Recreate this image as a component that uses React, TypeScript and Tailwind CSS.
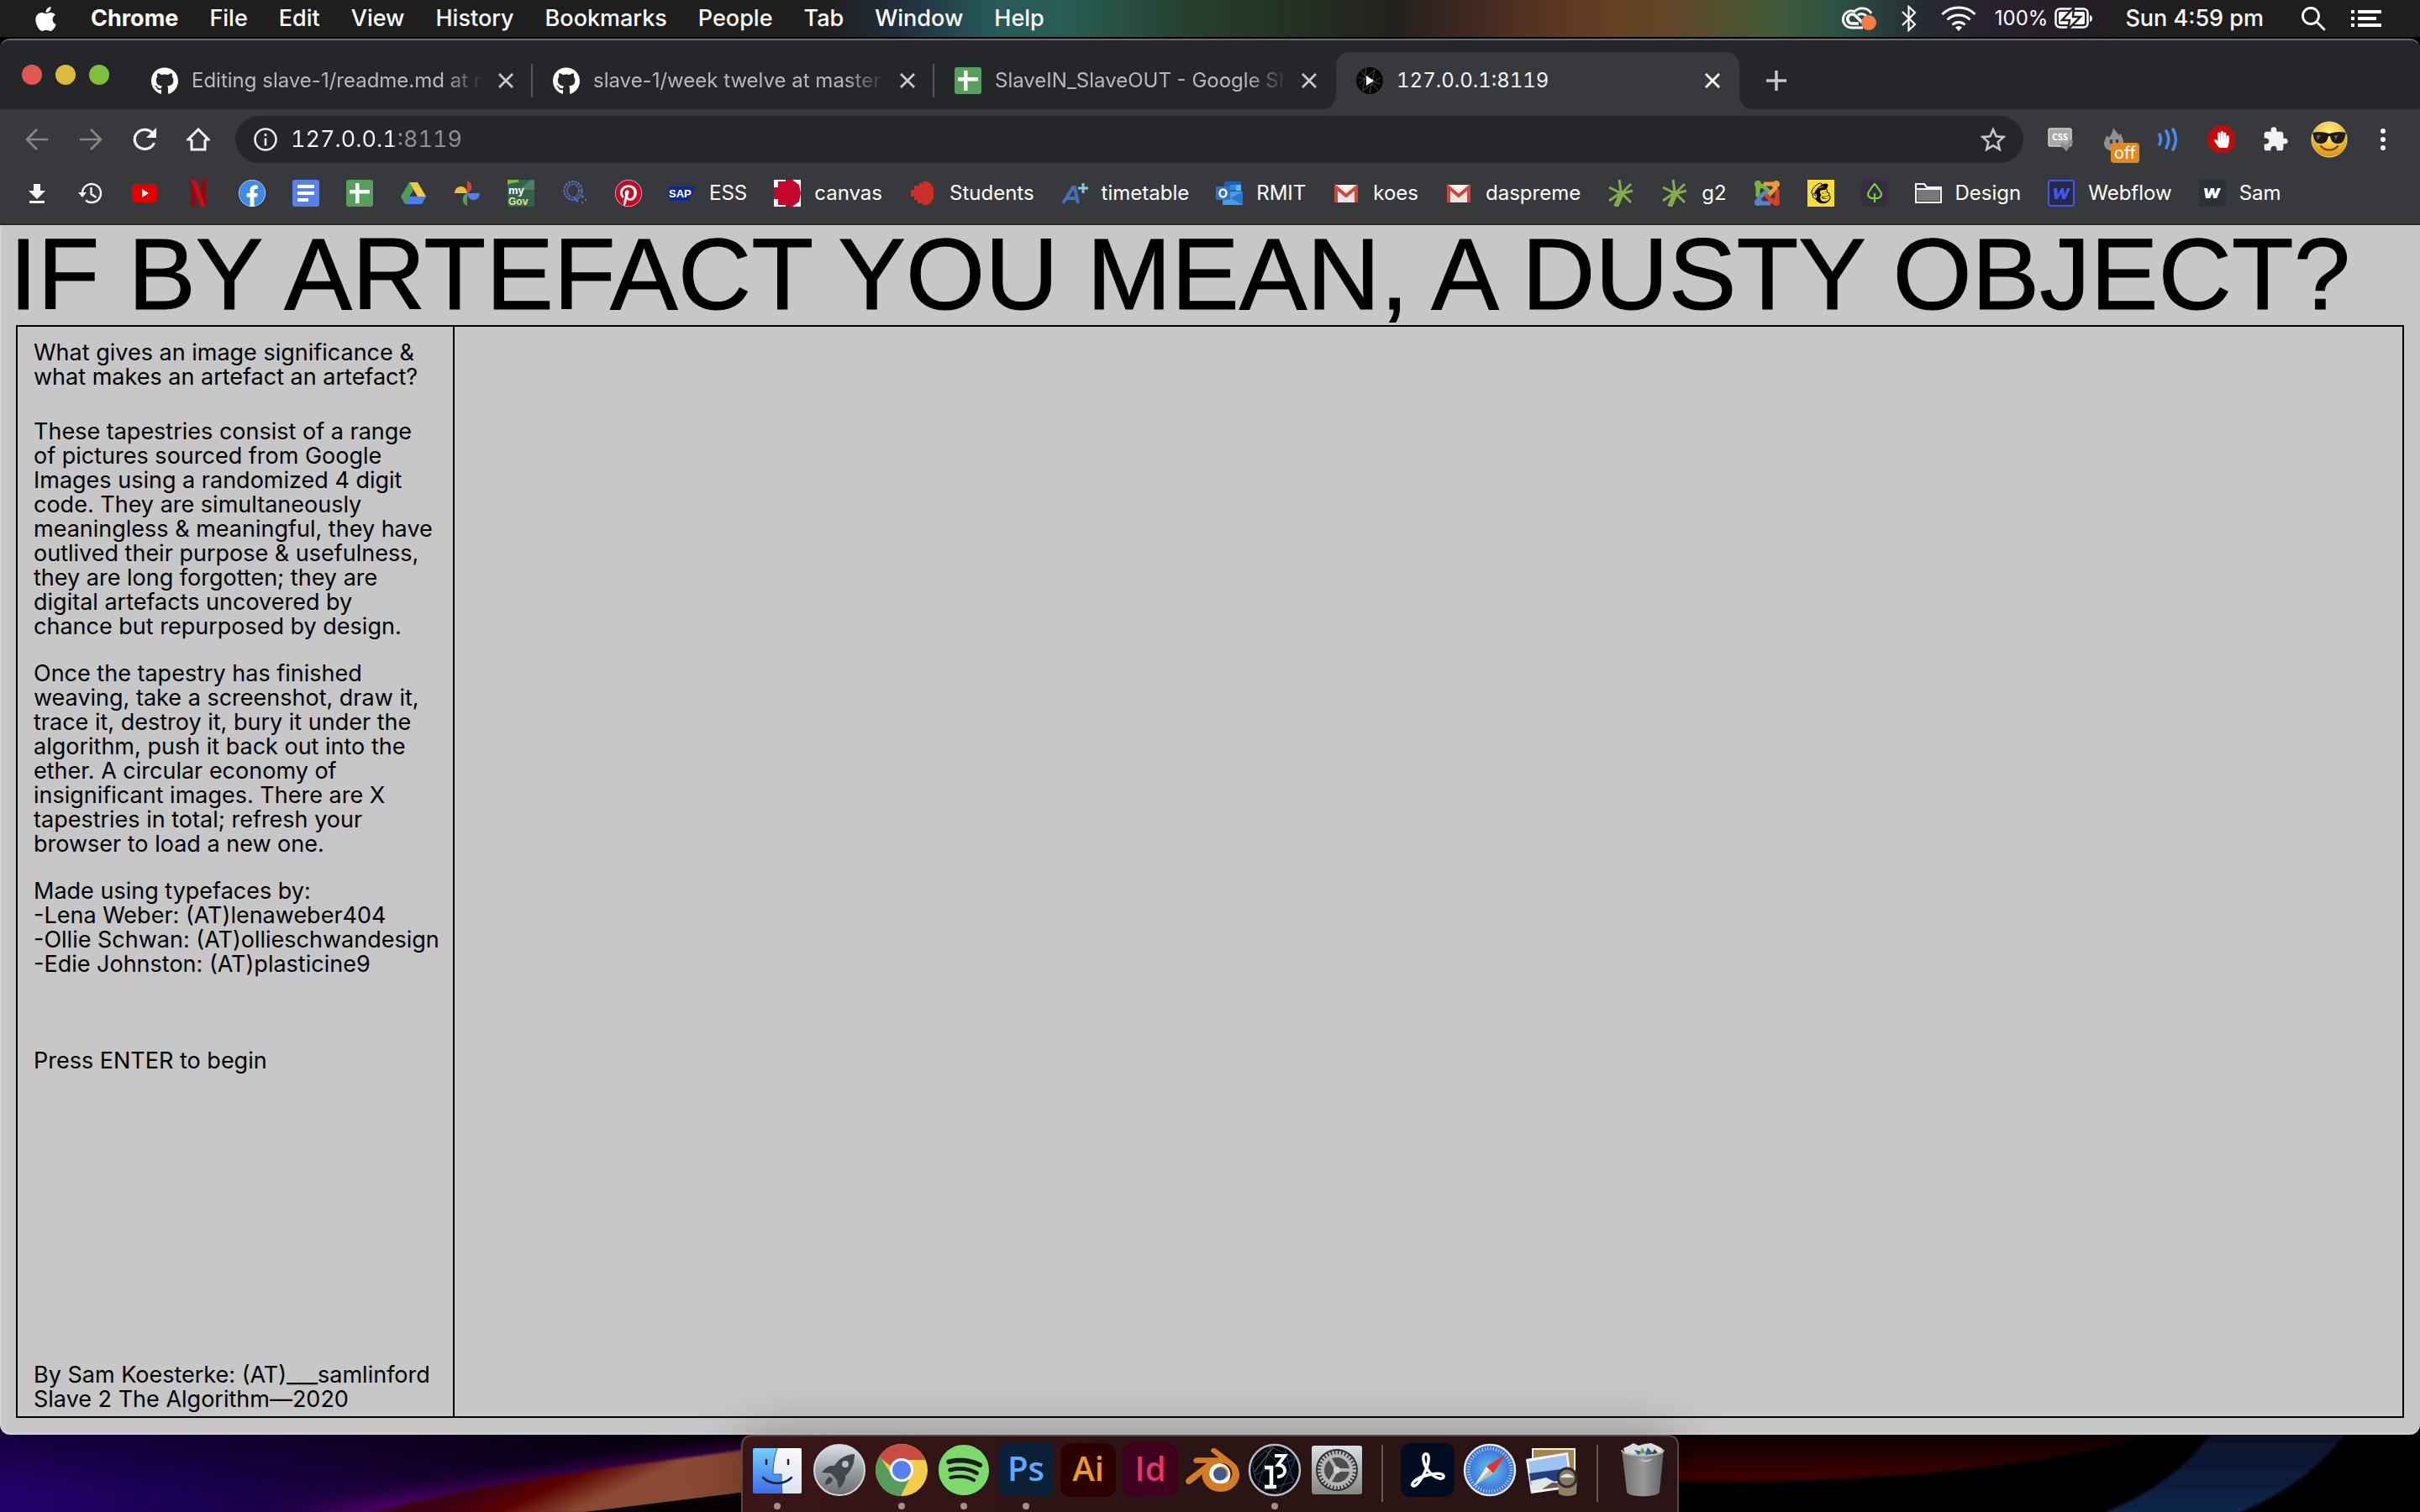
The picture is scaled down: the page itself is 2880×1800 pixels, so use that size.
import React from "react";
import { FaApple, FaFacebook, FaGithub, FaHandPaper, FaMailchimp, FaPinterest, FaSpotify } from "react-icons/fa";
import { MdExtension } from "react-icons/md";
import { SiBlender } from "react-icons/si";

type Box = { className?: string };

/* ---------- menu bar icons ---------- */

const CloudIcon = () => (
  <svg viewBox="0 0 42 32" className="h-8 w-[42px]" fill="none" stroke="#fff" strokeWidth="2.800">
    <path d="M26 27H12a10 10 0 1 1 4-19.300" />
    <path d="M15 9a12 11 0 0 1 21 1" />
    <path d="M21 22H13a5.500 5.500 0 1 1 4.500-9l8 8" strokeWidth="3.600" />
    <path d="M20 12a8 8 0 0 1 10 1" strokeWidth="3.200" />
    <circle cx="33" cy="21" r="9" fill="#f47b42" stroke="none" />
  </svg>
);

const BluetoothIcon = () => (
  <svg viewBox="0 0 20 32" className="h-8 w-5" fill="none" stroke="#fff" strokeWidth="2.200">
    <path d="M2 8l15 15-7.500 7V2L17 9 2 24" />
  </svg>
);

const WifiIcon = () => (
  <svg viewBox="0 0 42 32" className="h-8 w-[42px]" fill="none" stroke="#fff" strokeWidth="3">
    <path d="M1.500 11a28 28 0 0 1 39 0M7.500 17.500a19.500 19.500 0 0 1 27 0M13.500 23.500a11 11 0 0 1 15 0" />
    <path d="M21 31l-4-4.500a6 6 0 0 1 8 0z" fill="#fff" stroke="none" />
  </svg>
);

const BatteryIcon = () => (
  <svg viewBox="0 0 46 26" className="h-[26px] w-[46px]">
    <rect x="1.500" y="1.500" width="38" height="22" rx="5" fill="none" stroke="#fff" strokeWidth="2.500" />
    <rect x="5" y="5" width="31" height="15" rx="2" fill="#fff" />
    <path d="M42 9v8c4-1 4-7 0-8z" fill="#fff" />
    <path d="M23 0L9 15h9l-2 11 15-15h-9z" fill="#fff" stroke="#26202b" strokeWidth="2.500" />
  </svg>
);

const SearchIcon = () => (
  <svg viewBox="0 0 30 30" className="h-[30px] w-[30px]" fill="none" stroke="#fff" strokeWidth="2.800">
    <circle cx="12" cy="12" r="9.500" />
    <path d="M19 19l9 9" strokeLinecap="round" />
  </svg>
);

const ListIcon = () => (
  <svg viewBox="0 0 36 22" className="h-[22px] w-9" fill="#fff">
    <path d="M0 1h4v4H0zM8 1h28v4H8zM0 9h4v4H0zM8 9h22v4H8zM0 17h4v4H0zM8 17h28v4H8z" />
  </svg>
);

/* ---------- browser icons ---------- */

const Cross = ({ className = "" }: Box) => (
  <svg viewBox="0 0 20 20" className={`h-5 w-5 ${className}`} fill="none" stroke="currentColor" strokeWidth="2.800">
    <path d="M2 2l16 16M18 2L2 18" />
  </svg>
);

const SheetsIcon = () => (
  <svg viewBox="0 0 32 32" className="h-8 w-8">
    <rect width="32" height="32" rx="3" fill="#579f5d" />
    <path d="M4 12h24v4.500H4zM11 4h4.500v24H11z" fill="#fff" />
  </svg>
);

const ProcessingMini = () => (
  <svg viewBox="0 0 32 32" className="h-8 w-8">
    <circle cx="16" cy="16" r="16" fill="#060606" />
    <path d="M6 5l20 22M3 20L22 3M8 28L29 12M12 1L8 28M3 12l26 8M22 3l-6 28" stroke="#4a4a4a" strokeWidth="1" />
    <path d="M12 10l9 6-9 6z" fill="#fff" />
  </svg>
);

const BackIcon = () => (
  <svg viewBox="0 0 28 28" className="h-7 w-7" fill="none" stroke="#87888a" strokeWidth="2.600">
    <path d="M27 14H3M14 2L2 14l12 12" />
  </svg>
);
const ForwardIcon = () => (
  <svg viewBox="0 0 28 28" className="h-7 w-7" fill="none" stroke="#87888a" strokeWidth="2.600">
    <path d="M1 14h24M14 2l12 12-12 12" />
  </svg>
);
const ReloadIcon = () => (
  <svg viewBox="0 0 28 28" className="h-7 w-7" fill="none" stroke="#f1f3f4" strokeWidth="3.200">
    <path d="M23 6a12 11.500 0 1 0 2.500 12" />
    <path d="M28 0v12H16z" fill="#f1f3f4" stroke="none" />
  </svg>
);
const HomeIcon = () => (
  <svg viewBox="0 0 28 28" className="h-7 w-7" fill="none" stroke="#f1f3f4" strokeWidth="3">
    <path d="M6 14v12h16V14M6 14H2L14 2l12 12h-4" />
  </svg>
);
const InfoIcon = () => (
  <svg viewBox="0 0 28 28" className="h-7 w-7" fill="none" stroke="#e8eaed" strokeWidth="2.600">
    <circle cx="14" cy="14" r="12.500" />
    <path d="M14 12.500v9M14 7v3" />
  </svg>
);
const StarIcon = () => (
  <svg viewBox="0 0 32 32" className="h-8 w-8" fill="none" stroke="#c5c7ca" strokeWidth="2.600">
    <path d="M16 4l3.500 8.300 9 .800-6.800 6 2 8.800L16 23.300 8.300 27.900l2-8.800-6.800-6 9-.800z" />
  </svg>
);

const CssIcon = () => (
  <svg viewBox="0 0 32 28" className="h-7 w-8">
    <rect x="2" y="1" width="27" height="21" rx="2" fill="#a9a9a9" stroke="#d0d0d0" strokeWidth="1.500" />
    <text x="15.500" y="15" textAnchor="middle" fontSize="11" fontWeight="700" fill="#fff" fontFamily="Open Sans, sans-serif">CSS</text>
    <path d="M17 19l6 6 7-10" fill="none" stroke="#8b8b8b" strokeWidth="4" />
  </svg>
);
const FlameIcon = () => (
  <svg viewBox="0 0 32 32" className="h-8 w-8">
    <path d="M15 2c4 6 5 6 7 9l2-2c2 6 4 9 3 14-1 5-5 7-11 7S4 27 4 21c0-4 2-5 3-10l3 3c3-4 4-7 5-12z" fill="#8f9092" />
    <path d="M11 16h3v5h-3zM18 16h3v5h-3z" fill="#3a3b3e" />
  </svg>
);
const SoundIcon = () => (
  <svg viewBox="0 0 28 30" className="h-[30px] w-7" fill="none" stroke="#4a8af4" strokeWidth="3.600" strokeLinecap="round">
    <path d="M4 9a14 14 0 0 1 0 12M12 5a20 20 0 0 1 0 20M20 3a24 24 0 0 1 0 24" />
  </svg>
);
const BlockIcon = () => (
  <span className="relative flex h-8 w-8 items-center justify-center">
    <svg viewBox="0 0 32 32" className="absolute h-8 w-8"><path d="M9 0h14l9 9v14l-9 9H9l-9-9V9z" fill="#c40a0a" /></svg>
    <FaHandPaper className="relative text-xl text-white" />
  </span>
);
const AvatarIcon = () => (
  <svg viewBox="0 0 44 44" className="h-11 w-11">
    <defs>
      <radialGradient id="face" cx=".5" cy=".3" r=".7"><stop offset="0" stopColor="#fff08a" /><stop offset=".6" stopColor="#f5c02c" /><stop offset="1" stopColor="#d98a14" /></radialGradient>
    </defs>
    <circle cx="22" cy="22" r="21" fill="url(#face)" stroke="#eadfb0" />
    <path d="M2 14c7-2 13-1 20 1 7-2 13-3 20-1l-1 3c-1 7-4 10-9 10-6 0-8-4-9-9h-2c-1 5-3 9-9 9-5 0-8-3-9-10z" fill="#1d1b18" />
    <path d="M7 17l5 0-4 6zM28 17h5l-4 6z" fill="#67635c" />
    <path d="M12 30c5 6 15 6 20 0" fill="none" stroke="#7b4a10" strokeWidth="2.500" strokeLinecap="round" />
  </svg>
);

/* ---------- bookmark icons ---------- */

const DownloadIcon = () => (
  <svg viewBox="0 0 32 32" className="h-8 w-8" fill="#f1f3f4"><path d="M12 5h8v8h6l-10 10L6 13h6zM7 25h18v3H7z" /></svg>
);
const HistoryIcon = () => (
  <svg viewBox="0 0 32 32" className="h-8 w-8" fill="none" stroke="#f1f3f4" strokeWidth="2.400">
    <path d="M6 16a11 11 0 1 1 4 8.500M16.500 9v8l6 4" />
    <path d="M1 15h10l-5 6z" fill="#f1f3f4" stroke="none" />
  </svg>
);
const YouTubeIcon = () => (
  <svg viewBox="0 0 32 32" className="h-8 w-8"><rect x="1" y="5" width="30" height="22" rx="5" fill="#e00000" /><path d="M13 11l8 5-8 5z" fill="#fff" /></svg>
);
const NetflixIcon = () => (
  <svg viewBox="0 0 32 32" className="h-8 w-8"><path d="M7 0h6v32H7zM19 0h6v32h-6z" fill="#8f0a10" /><path d="M7 0h6l12 32h-6z" fill="#c40e18" /></svg>
);
const DocsIcon = () => (
  <svg viewBox="0 0 32 32" className="h-8 w-8"><rect width="32" height="32" rx="3" fill="#5a80ee" /><path d="M6 6h20v4H6zM6 14h20v4H6zM6 22h13v4H6z" fill="#fff" /></svg>
);
const DriveIcon = () => (
  <svg viewBox="0 0 32 32" className="h-8 w-8"><path d="M11 3L1 20l5 9 10-17z" fill="#4e9d58" /><path d="M11 3h10l10 17H21z" fill="#f2c944" /><path d="M11 20h20l-5 9H6z" fill="#4f7ee8" /></svg>
);
const PhotosIcon = () => (
  <svg viewBox="0 0 32 32" className="h-8 w-8"><path d="M16 1a8 8 0 0 1 0 15z" fill="#cf4636" /><path d="M31 16a7.500 8 0 0 1-15 0z" fill="#5180ea" /><path d="M16 31a8 8 0 0 1 0-15z" fill="#57a05a" /><path d="M1 16a7.500 8 0 0 1 15 0z" fill="#eebd3c" /></svg>
);
const MyGovIcon = () => (
  <svg viewBox="0 0 32 32" className="h-8 w-8">
    <rect width="32" height="32" rx="2" fill="#33634f" /><path d="M14 12L28 0h4v12z" fill="#4d8066" /><path d="M0 0h13v3c-5 0-9 1-13 3z" fill="#7fb540" />
    <text x="1" y="17" fontSize="13" fontWeight="700" fill="#fff" fontFamily="Liberation Sans, sans-serif">my</text>
    <text x="1" y="30" fontSize="12" fontWeight="700" fill="#e8e87a" fontFamily="Liberation Sans, sans-serif">Gov</text>
  </svg>
);
const QuillIcon = () => (
  <svg viewBox="0 0 32 32" className="h-8 w-8" fill="none" stroke="#5470bd">
    <ellipse cx="14" cy="13" rx="10.500" ry="11" strokeWidth="2" strokeDasharray="3 1" /><ellipse cx="14" cy="13" rx="7" ry="8" strokeWidth="2" strokeDasharray="2 1" /><path d="M15 21l5 5M24 20h3M28 24h2M24 27h2" strokeWidth="2.500" />
  </svg>
);
const SapIcon = () => (
  <svg viewBox="0 0 32 32" className="h-8 w-8"><path d="M0 8h32L24 25H0z" fill="#0d2a8c" /><text x="0" y="21" fontSize="13" fontWeight="700" fill="#fff" fontFamily="Liberation Sans, sans-serif">SAP</text></svg>
);
const CanvasIcon = () => (
  <svg viewBox="0 0 32 32" className="h-8 w-8"><path d="M0 0h32v32H0z" fill="#fff" /><path d="M5 2h9v-2h8l8 6 2 10-2 10-8 6h-8v-2H5v-7H0V9h5z" fill="#c4062a" /></svg>
);
const StudentsIcon = () => (
  <svg viewBox="0 0 32 32" className="h-8 w-8"><path d="M16 2h6l4 3 3 5v12l-3 5-4 3h-6v-2h-6v-4H6v-4H2v-8h4V7h6V4h4z" fill="#c92f28" /></svg>
);
const TimetableIcon = () => (
  <svg viewBox="0 0 32 32" className="h-8 w-8" fill="none">
    <path d="M2 28L14 9h2l4 19M6 22h13" stroke="#3f72b8" strokeWidth="4" /><path d="M26 4v12M20 10h12" stroke="#8fc3e0" strokeWidth="3" />
  </svg>
);
const OutlookIcon = () => (
  <svg viewBox="0 0 32 32" className="h-8 w-8">
    <path d="M10 2h20v15H10z" fill="#1f5fb8" /><path d="M17 6h7v6h-7z" fill="#3388d8" /><path d="M24 6h6v7h-6z" fill="#62b4ec" />
    <path d="M8 14h24v16H8z" fill="#4a9be4" /><path d="M32 14v16L18 22z" fill="#2c74cc" /><rect y="8" width="17" height="16" rx="1" fill="#2f6fd0" />
    <ellipse cx="8.500" cy="16" rx="4" ry="4.500" fill="none" stroke="#fff" strokeWidth="2.500" />
  </svg>
);
const GmailIcon = () => (
  <svg viewBox="0 0 32 32" className="h-8 w-8"><rect x="2" y="6" width="28" height="21" rx="2" fill="#e8e6e4" /><path d="M4 27V9l12 10L28 9v18" fill="none" stroke="#cc463a" strokeWidth="4" /><path d="M7 6l9 8 9-8z" fill="#f4f2f0" /></svg>
);
const SproutIcon = () => (
  <svg viewBox="0 0 32 32" className="h-8 w-8" fill="none" stroke="#82ad4c">
    <path d="M14 0l2 13M28 5l-9 9M30 13l-11 3M2 9l12 6M2 25l13-9M18 17l10 10" strokeWidth="3" />
    <path d="M17 13c-1 7-4 12-7 19" strokeWidth="6" />
  </svg>
);
const JoomlaIcon = () => (
  <svg viewBox="0 0 32 32" className="h-8 w-8" fill="none" strokeWidth="5">
    <path d="M5 20V9l6-2 9 9" stroke="#78b63a" /><path d="M12 5h11l3 5-9 9" stroke="#ee9a35" /><path d="M28 12v11l-6 3-9-10" stroke="#df3e29" /><path d="M20 28H9l-3-6 10-9" stroke="#5585c9" />
    <circle cx="5" cy="5" r="3" fill="#78b63a" stroke="#78b63a" strokeWidth="2" /><circle cx="27" cy="5" r="3" fill="#ee9a35" stroke="#ee9a35" strokeWidth="2" /><circle cx="27" cy="27" r="3" fill="#df3e29" stroke="#df3e29" strokeWidth="2" /><circle cx="5" cy="27" r="3" fill="#5585c9" stroke="#5585c9" strokeWidth="2" />
  </svg>
);
const ChimpIcon = () => (
  <span className="flex h-8 w-8 items-center justify-center bg-[#f7dc3c]"><FaMailchimp className="text-[28px] text-black" /></span>
);
const TreeIcon = () => (
  <svg viewBox="0 0 32 32" className="h-8 w-8"><rect width="32" height="32" rx="6" fill="#3b2b42" /><path d="M16 27V16M16 22h-4c-5-2-5-6-2-9 2-3 3-5 6-8 3 3 4 5 6 8 3 3 3 7-2 9h-4" fill="none" stroke="#66e02e" strokeWidth="2.200" /></svg>
);
const FolderIcon = () => (
  <svg viewBox="0 0 32 32" className="h-8 w-8"><path d="M1 27V5h10l3 4h17v18z" fill="#38393c" stroke="#f1f3f4" strokeWidth="2.200" /><path d="M3 12h26v13H3z" fill="#77787a" /><path d="M1 11h30" stroke="#f1f3f4" strokeWidth="2" /></svg>
);
const WebflowIcon = () => (
  <svg viewBox="0 0 32 32" className="h-8 w-8"><rect x="1" y="1" width="30" height="30" rx="3" fill="#262a3a" stroke="#4353ff" strokeWidth="2" /><path d="M7 10h4l1 8 4-8h3l1 8 3-8h4l-6 13h-4l-1-7-4 7H8z" fill="#4353ff" /></svg>
);
const SamIcon = () => (
  <svg viewBox="0 0 32 32" className="h-8 w-8"><path d="M0 0h32v32H0z" fill="#2d313c" /><path d="M6 10h4l1 7 3-7h4l1 7 3-7h4l-5 12h-4l-1-6-3 6H8z" fill="#fff" /></svg>
);

const bookmarks: { name: string; label?: string; icon: React.ReactNode }[] = [
  { name: "Downloads", icon: <DownloadIcon /> },
  { name: "History", icon: <HistoryIcon /> },
  { name: "YouTube", icon: <YouTubeIcon /> },
  { name: "Netflix", icon: <NetflixIcon /> },
  { name: "Facebook", icon: <span className="block rounded-full bg-white"><FaFacebook className="text-[32px] text-[#3f8be8]" /></span> },
  { name: "Docs", icon: <DocsIcon /> },
  { name: "Sheets", icon: <SheetsIcon /> },
  { name: "Drive", icon: <DriveIcon /> },
  { name: "Photos", icon: <PhotosIcon /> },
  { name: "myGov", icon: <MyGovIcon /> },
  { name: "Q", icon: <QuillIcon /> },
  { name: "Pinterest", icon: <span className="block rounded-full bg-white"><FaPinterest className="text-[32px] text-[#c40a24]" /></span> },
  { name: "ESS", label: "ESS", icon: <SapIcon /> },
  { name: "canvas", label: "canvas", icon: <CanvasIcon /> },
  { name: "Students", label: "Students", icon: <StudentsIcon /> },
  { name: "timetable", label: "timetable", icon: <TimetableIcon /> },
  { name: "RMIT", label: "RMIT", icon: <OutlookIcon /> },
  { name: "koes", label: "koes", icon: <GmailIcon /> },
  { name: "daspreme", label: "daspreme", icon: <GmailIcon /> },
  { name: "g1", icon: <SproutIcon /> },
  { name: "g2", label: "g2", icon: <SproutIcon /> },
  { name: "Joomla", icon: <JoomlaIcon /> },
  { name: "Mailchimp", icon: <ChimpIcon /> },
  { name: "Tree", icon: <TreeIcon /> },
  { name: "Design", label: "Design", icon: <FolderIcon /> },
  { name: "Webflow", label: "Webflow", icon: <WebflowIcon /> },
  { name: "Sam", label: "Sam", icon: <SamIcon /> },
];

/* ---------- dock icons ---------- */

const FinderIcon = () => (
  <svg viewBox="0 0 64 64" className="h-16 w-16">
    <defs>
      <linearGradient id="fl" x2="0" y2="1"><stop stopColor="#74d0fb" /><stop offset="1" stopColor="#3f6bea" /></linearGradient>
      <linearGradient id="fr" x2="0" y2="1"><stop stopColor="#f8f8f8" /><stop offset="1" stopColor="#dce3f2" /></linearGradient>
    </defs>
    <rect x="3" y="6" width="58" height="54" rx="2" fill="url(#fl)" />
    <path d="M32 6h27a2 2 0 0 1 2 2v50a2 2 0 0 1-2 2H38c-1-7-1-14-1-23h-10c0-12 2-22 5-31z" fill="url(#fr)" />
    <path d="M32 6c-3 9-5 18-5 31h10c0 9 0 16 1 23" fill="none" stroke="#2a5ca8" strokeWidth="1" />
    <path d="M19 20v5M45 20v5M15 41c9 9 25 9 34 0" fill="none" stroke="#15233c" strokeWidth="2.500" strokeLinecap="round" />
  </svg>
);
const LaunchpadIcon = () => (
  <svg viewBox="0 0 64 64" className="h-16 w-16">
    <defs><linearGradient id="lp" x2="0" y2="1"><stop stopColor="#dbe4ec" /><stop offset=".5" stopColor="#9aa0a6" /><stop offset="1" stopColor="#6d6e70" /></linearGradient></defs>
    <circle cx="32" cy="32" r="30" fill="url(#lp)" stroke="#d5d9dc" strokeWidth="2" />
    <path d="M50 13c-12 1-19 6-24 14-5-1-11 2-15 8l11 1 7 8 2 10c6-4 8-10 8-15 7-6 11-14 11-26z" fill="#42474b" />
    <circle cx="39" cy="25" r="4" fill="#b9bec2" /><path d="M21 40c-5 2-6 6-6 10 5-1 8-3 9-7z" fill="#42474b" />
  </svg>
);
const ChromeIcon = () => (
  <svg viewBox="0 0 64 64" className="h-16 w-16">
    <circle cx="32" cy="32" r="31" fill="#f4cb4a" />
    <path d="M5.200 16.500A31 31 0 0 1 60.500 20H32a13 13 0 0 0-12 8z" fill="#c84c40" />
    <path d="M6 15.500A31 31 0 0 0 31 63l12-24a13 13 0 0 1-23-1z" fill="#569c5c" />
    <circle cx="32" cy="32" r="14" fill="#fff" /><circle cx="32" cy="32" r="11" fill="#5781ee" />
  </svg>
);
const AdobeTile = ({ text, className }: { text: string; className: string }) => (
  <span className={`flex h-16 w-[66px] items-center justify-center rounded-xl pb-1 font-['Open_Sans','Noto_Sans',sans-serif] text-[40px] leading-none font-semibold ${className}`}>{text}</span>
);
const ProcessingIcon = () => (
  <svg viewBox="0 0 64 64" className="h-16 w-16">
    <circle cx="32" cy="32" r="30" fill="#04070d" stroke="#b9bcc0" strokeWidth="2.500" />
    <path d="M5 24l22-20 30 14-20 42-28-18zM27 4L12 50M57 18L8 38M20 8l36 36M44 6l10 40-34 10" fill="none" stroke="#31456a" strokeWidth="1" />
    <path d="M30 5L8 34" stroke="#8a8a50" strokeWidth="1" />
    <path d="M20 29h8v22M20 52h14" fill="none" stroke="#fff" strokeWidth="4.500" />
    <path d="M32 15h12l-8 11c11 0 11 14-1 14" fill="none" stroke="#fff" strokeWidth="4" />
  </svg>
);
const SettingsIcon = () => (
  <svg viewBox="0 0 64 64" className="h-16 w-16">
    <defs><linearGradient id="st" x2="0" y2="1"><stop stopColor="#d6e2ea" /><stop offset="1" stopColor="#85837f" /></linearGradient></defs>
    <rect x="2" y="3" width="60" height="58" rx="3" fill="url(#st)" />
    <circle cx="32" cy="32" r="25" fill="#2d2d2d" />
    <circle cx="32" cy="32" r="20.500" fill="none" stroke="#b5b5b5" strokeWidth="5" strokeDasharray="2.600 1.500" />
    <circle cx="32" cy="32" r="17" fill="#4d4d4d" stroke="#b5b5b5" strokeWidth="4" />
    <path d="M32 32h17M32 32L23 17M32 32l-9 15" stroke="#b5b5b5" strokeWidth="4" /><circle cx="32" cy="32" r="4" fill="#d0d0d0" />
  </svg>
);
const AcrobatIcon = () => (
  <svg viewBox="0 0 64 64" className="h-16 w-16">
    <rect width="64" height="64" rx="12" fill="#020c20" />
    <path d="M29 13c5-2 6 8 0 21-5 11-11 18-14 17-4-2 2-9 17-13 11-3 20-2 19 2-1 5-12 1-18-7-6-7-8-18-4-20z" fill="none" stroke="#fff" strokeWidth="3.500" strokeLinejoin="round" />
  </svg>
);
const SafariIcon = () => (
  <svg viewBox="0 0 64 64" className="h-16 w-16">
    <defs><radialGradient id="sf"><stop stopColor="#6cc4e8" /><stop offset="1" stopColor="#2f66d8" /></radialGradient></defs>
    <circle cx="32" cy="32" r="30" fill="url(#sf)" stroke="#e4e6ea" strokeWidth="2.500" />
    <circle cx="32" cy="32" r="25.500" fill="none" stroke="#cfe3f8" strokeWidth="4" strokeDasharray="1 2.330" />
    <path d="M51 13L28 28l8 8z" fill="#e0322c" /><path d="M13 51l15-23 8 8z" fill="#eceef0" /><path d="M13 51l19-19 4 4z" fill="#b8bcc0" />
  </svg>
);
const PreviewIcon = () => (
  <svg viewBox="0 0 64 64" className="h-16 w-16">
    <rect x="9" y="7" width="50" height="40" fill="#a5834e" stroke="#f0f0f0" strokeWidth="2" />
    <path d="M1 19l50-8 5 42-49 7z" fill="#f4f4f4" /><path d="M4 22l45-8 2 18-45 5z" fill="#9fc3f0" /><path d="M5 36l46-6 2 13-46 7z" fill="#233f82" /><path d="M7 45l18-4 12 6 16-6 1 9-46 7z" fill="#dfe6ea" /><path d="M20 55l12-8 20 1v3z" fill="#6a5a44" />
    <path d="M39 42h23l-1 18c-4 4-17 4-21 0z" fill="#8d8065" /><circle cx="50" cy="41" r="11" fill="#86795e" stroke="#2b2b2b" strokeWidth="3" /><path d="M42 41c4-6 12-6 16 0z" fill="#dce2e6" />
  </svg>
);
const TrashIcon = () => (
  <svg viewBox="0 0 64 64" className="h-16 w-16">
    <defs><linearGradient id="tr"><stop stopColor="#6c6e70" /><stop offset=".5" stopColor="#98999b" /><stop offset="1" stopColor="#5f6163" /></linearGradient></defs>
    <path d="M11 13L9 6l7-3 5-3 6 3 7-2 8-1 9 4 5 3-2 8z" fill="#dcdcdc" /><path d="M22 8l8 2-3 5zM38 5l7 8-11 2z" fill="#2f5d90" /><path d="M31 5l5 7-8 1z" fill="#74a04a" /><path d="M46 7l5 6-9 1z" fill="#4a3d3d" />
    <path d="M7 8c0 9 50 9 50 0l-5 50c-1 7-38 7-39 0z" fill="url(#tr)" /><path d="M7 8c0 9 50 9 50 0" fill="none" stroke="#b7babd" strokeWidth="2" />
    <path d="M27 18c6 7 12 5 18 0-4 2-14 3-18 0z" fill="#bdbdbd" />
  </svg>
);

type DockApp = { name: string; icon: React.ReactNode; open?: boolean };

const apps: DockApp[] = [
  { name: "Finder", icon: <FinderIcon />, open: true },
  { name: "Launchpad", icon: <LaunchpadIcon /> },
  { name: "Chrome", icon: <ChromeIcon />, open: true },
  { name: "Spotify", icon: <span className="block rounded-full bg-[#1c1c1c]"><FaSpotify className="text-[62px] text-[#7dd96c]" /></span>, open: true },
  { name: "Photoshop", icon: <AdobeTile text="Ps" className="bg-[#0c2135] text-[#62a8ff]" />, open: true },
  { name: "Illustrator", icon: <AdobeTile text="Ai" className="bg-[#2d0000] text-[#ec9a28]" /> },
  { name: "InDesign", icon: <AdobeTile text="Id" className="bg-[#3f0020] text-[#e2386a]" /> },
  {
    name: "Blender",
    icon: (
      <span className="relative flex h-16 w-16 items-center justify-center">
        <svg viewBox="0 0 24 24" className="absolute h-16 w-16"><circle cx="15" cy="14" r="5" fill="#fff" /></svg>
        <SiBlender className="relative text-[64px] text-[#d37c22]" />
        <svg viewBox="0 0 24 24" className="absolute h-16 w-16"><circle cx="15.300" cy="13.800" r="2.900" fill="#3d5c8e" /></svg>
      </span>
    ),
  },
  { name: "Processing", icon: <ProcessingIcon />, open: true },
  { name: "Settings", icon: <SettingsIcon /> },
];
const tools: DockApp[] = [
  { name: "Acrobat", icon: <AcrobatIcon /> },
  { name: "Safari", icon: <SafariIcon /> },
  { name: "Preview", icon: <PreviewIcon /> },
];

const DockItem = ({ app }: { app: DockApp }) => (
  <button aria-label={app.name} className="flex w-[74px] flex-col items-center">
    <span className="flex h-16 items-center">{app.icon}</span>
    <span className={`mt-[7px] h-2 w-2 rounded-full ${app.open ? "bg-[#a98d8d]" : "bg-transparent"}`} />
  </button>
);

/* ---------- page parts ---------- */

const menus = ["File", "Edit", "View", "History", "Bookmarks", "People", "Tab", "Window", "Help"];

const MenuBar = () => (
  <header className="relative flex h-11 shrink-0 items-center justify-between bg-[linear-gradient(90deg,#1e1e1e_0,#1e1e1e_34%,#22303f_37.5%,#275a5a_41%,#295d54_44%,#26402f_49%,#242f22_54%,#23211e_57.5%,#3a2520_60%,#5a3622_64%,#654323_67%,#634528_69%,#445a36_73%,#2c5244_76%,#252a33_79.5%,#281f2c_83%,#1e1e1e_90%)] text-[27px] font-medium text-white">
    <nav className="flex items-center pl-[38px]">
      <button aria-label="Apple menu" className="mr-[37px]"><FaApple className="text-[33px]" /></button>
      <div className="flex gap-[37px]">
        <button className="font-bold">Chrome</button>
        {menus.map((m) => <button key={m}>{m}</button>)}
      </div>
    </nav>
    <div className="flex items-center pr-[46px]">
      <CloudIcon />
      <span className="ml-[29px]"><BluetoothIcon /></span>
      <span className="ml-7"><WifiIcon /></span>
      <span className="ml-[22px] mr-2 text-2xl font-normal">100%</span>
      <BatteryIcon />
      <time className="mr-[44px] ml-[38px]">Sun 4:59 pm</time>
      <button aria-label="Search" className="mr-[30px]"><SearchIcon /></button>
      <button aria-label="Notifications"><ListIcon /></button>
    </div>
  </header>
);

const tabs = [
  { title: "Editing slave-1/readme.md at master", icon: <FaGithub className="text-[33px] text-white" /> },
  { title: "slave-1/week twelve at master · samlinford", icon: <FaGithub className="text-[33px] text-white" /> },
  { title: "SlaveIN_SlaveOUT - Google Sheets", icon: <SheetsIcon /> },
];

const TabStrip = () => (
  <div className="flex h-[82px] items-end bg-[#25262a] text-2xl">
    <div className="flex h-[82px] w-[156px] shrink-0 items-center gap-4 pl-[26px]">
      <button aria-label="Close window" className="h-6 w-6 rounded-full bg-[#e0594f]" />
      <button aria-label="Minimise window" className="h-6 w-6 rounded-full bg-[#dcbb3c]" />
      <button aria-label="Zoom window" className="h-6 w-6 rounded-full bg-[#7cc03c]" />
    </div>
    {tabs.map((t, i) => (
      <div key={t.title} className="flex h-[68px] w-[478px] shrink-0 items-center">
        <button className="ml-6 flex min-w-0 flex-1 items-center text-[#b7b9bc]">
          <span className="mr-4 flex h-8 w-8 shrink-0 items-center justify-center">{t.icon}</span>
          <span className="overflow-hidden whitespace-nowrap [mask-image:linear-gradient(90deg,#000_86%,transparent)]">{t.title}</span>
        </button>
        <button aria-label="Close tab" className="mr-5 ml-4 text-[#c8cacd]"><Cross /></button>
        <span className={`h-10 w-0.5 ${i < 2 ? "bg-[#55565a]" : "bg-transparent"}`} />
      </div>
    ))}
    <div className="relative flex h-[68px] w-[480px] shrink-0 items-center rounded-t-2xl bg-[#38393d] before:absolute before:bottom-0 before:-left-4 before:h-4 before:w-4 before:bg-[radial-gradient(circle_at_0_0,transparent_16px,#38393d_16px)] after:absolute after:-right-4 after:bottom-0 after:h-4 after:w-4 after:bg-[radial-gradient(circle_at_100%_0,transparent_16px,#38393d_16px)]">
      <button className="ml-6 flex flex-1 items-center text-[#f1f3f4] tabular-nums">
        <span className="mr-4"><ProcessingMini /></span>127.0.0.1:8119
      </button>
      <button aria-label="Close tab" className="mr-[22px] text-white"><Cross /></button>
    </div>
    <button aria-label="New tab" className="mb-[22px] ml-8 text-[#c5c7ca]">
      <svg viewBox="0 0 24 24" className="h-6 w-6" stroke="currentColor" strokeWidth="3.500"><path d="M12 0v24M0 12h24" /></svg>
    </button>
  </div>
);

const Toolbar = () => (
  <div className="flex h-[72px] items-center gap-9 bg-[#38393d] pl-[30px]">
    <button aria-label="Back"><BackIcon /></button>
    <button aria-label="Forward"><ForwardIcon /></button>
    <button aria-label="Reload"><ReloadIcon /></button>
    <button aria-label="Home"><HomeIcon /></button>
    <div className="-ml-1.5 flex h-14 flex-1 items-center rounded-full bg-[#25262a] pr-5 pl-[22px]">
      <InfoIcon />
      <input aria-label="Address" defaultValue="127.0.0.1:8119" className="mx-4 flex-1 bg-[linear-gradient(90deg,#f4f5f6_122px,#8f9194_122px)] bg-clip-text text-[27px] text-transparent tabular-nums outline-none" />
      <button aria-label="Bookmark this page"><StarIcon /></button>
    </div>
    <div className="-ml-2 flex items-center gap-8 pr-7">
      <button aria-label="CSS viewer"><CssIcon /></button>
      <button aria-label="Blocker" className="relative">
        <FlameIcon />
        <span className="absolute top-5 left-3 rounded-sm bg-[#e4871c] px-1 text-xl leading-6 text-white">off</span>
      </button>
      <button aria-label="Sound" className="flex w-8 justify-center"><SoundIcon /></button>
      <button aria-label="Ad block"><BlockIcon /></button>
      <button aria-label="Extensions"><MdExtension className="text-[32px] text-[#f1f3f4]" /></button>
      <button aria-label="Profile" className="-mx-1.5"><AvatarIcon /></button>
      <button aria-label="More" className="flex w-8 justify-center">
        <svg viewBox="0 0 8 28" className="h-7 w-2" fill="#f1f3f4"><circle cx="4" cy="4" r="3" /><circle cx="4" cy="14" r="3" /><circle cx="4" cy="24" r="3" /></svg>
      </button>
    </div>
  </div>
);

const BookmarksBar = () => (
  <nav className="flex h-[66px] items-start gap-8 overflow-hidden border-b-2 border-[#2b2b2d] bg-[#38393d] pt-3 pl-7 text-2xl text-white">
    {bookmarks.map((b) => (
      <a key={b.name} href="#" aria-label={b.name} className="flex shrink-0 items-center gap-4">
        <span className="h-8 w-8">{b.icon}</span>
        {b.label && <span className="leading-8">{b.label}</span>}
      </a>
    ))}
  </nav>
);

const intro = `What gives an image significance &
what makes an artefact an artefact?`;
const about = `These tapestries consist of a range
of pictures sourced from Google
Images using a randomized 4 digit
code. They are simultaneously
meaningless & meaningful, they have
outlived their purpose & usefulness,
they are long forgotten; they are
digital artefacts uncovered by
chance but repurposed by design.`;
const howTo = `Once the tapestry has finished
weaving, take a screenshot, draw it,
trace it, destroy it, bury it under the
algorithm, push it back out into the
ether. A circular economy of
insignificant images. There are X
tapestries in total; refresh your
browser to load a new one.`;
const credits = `Made using typefaces by:
-Lena Weber: (AT)lenaweber404
-Ollie Schwan: (AT)ollieschwandesign
-Edie Johnston: (AT)plasticine9`;
const author = `By Sam Koesterke: (AT)___samlinford
Slave 2 The Algorithm—2020`;

const Page = () => (
  <main className="flex flex-1 flex-col rounded-b-xl border-b-2 border-l-2 border-[#d2d3d3] bg-[#c7c7c7] pr-[19px] pb-[18px] pl-[17px] text-black">
    <h1 className="-ml-2 mb-[3px] font-['Liberation_Sans',Arial,sans-serif] text-[121px] leading-[116px] whitespace-nowrap [-webkit-text-stroke:1px_#000]">IF BY ARTEFACT YOU MEAN, A DUSTY OBJECT?</h1>
    <div className="flex flex-1 border-2 border-black">
      <aside className="flex w-[520px] shrink-0 flex-col border-r-2 border-black px-[19px] pt-4 pb-1.5 text-[27px] leading-[29px] whitespace-pre">
        <p className="mb-9">{intro}</p>
        <p className="mb-[27px]">{about}</p>
        <p className="mb-[27px]">{howTo}</p>
        <p className="mb-[86px]">{credits}</p>
        <p>Press ENTER to begin</p>
        <p className="mt-auto">{author}</p>
      </aside>
      <section aria-label="Tapestry" className="flex-1" />
    </div>
  </main>
);

const Wallpaper = () => (
  <svg viewBox="0 0 2880 110" preserveAspectRatio="none" className="absolute bottom-0 left-0 h-[110px] w-full">
    <defs>
      <linearGradient id="wp"><stop stopColor="#25006c" /><stop offset=".06" stopColor="#1b0058" /><stop offset=".16" stopColor="#180036" /><stop offset=".3" stopColor="#06000e" /><stop offset=".5" stopColor="#000" /></linearGradient>
      <linearGradient id="top" x2="0" y2="1"><stop offset=".2" stopColor="#000" stopOpacity=".4" /><stop offset=".8" stopColor="#000" stopOpacity="0" /></linearGradient>
      <linearGradient id="rd" gradientUnits="userSpaceOnUse" x1="650" y1="45" x2="680" y2="110"><stop stopColor="#3a0012" /><stop offset=".5" stopColor="#5c0300" /><stop offset="1" stopColor="#8a4a32" /></linearGradient>
      <linearGradient id="rg" x2="0" y2="1"><stop stopColor="#0c0000" /><stop offset="1" stopColor="#420000" /></linearGradient>
      <linearGradient id="bl" x2="0" y2="1"><stop stopColor="#0a0f28" /><stop offset="1" stopColor="#10264a" /></linearGradient>
      <filter id="soft" x="-20%" y="-50%" width="140%" height="200%"><feGaussianBlur stdDeviation="14" /></filter>
      <filter id="fine"><feGaussianBlur stdDeviation="1.500" /></filter>
    </defs>
    <rect width="2880" height="110" fill="url(#wp)" />
    <rect width="2880" height="110" fill="url(#top)" />
    <path d="M320 122C480 96 700 60 920 34v40L480 132z" fill="#68007a" filter="url(#soft)" />
    <path d="M440 112C560 76 700 62 900 34v76z" fill="url(#rd)" filter="url(#fine)" />
    <path d="M680 112L920 82v30z" fill="#080206" />
    <path d="M1990 18H2560C2400 66 2160 76 1990 73z" fill="url(#rg)" filter="url(#fine)" />
    <path d="M2630 18h160c-30 40-70 70-128 94h-160c60-25 100-55 128-94z" fill="url(#bl)" filter="url(#fine)" />
  </svg>
);

const Separator = () => <span className="mx-4 mt-0.5 h-[68px] w-0.5 bg-[#6b5656]" />;

const Dock = () => (
  <footer className="relative flex h-[92px] shrink-0 justify-center">
    <div className="flex rounded-t-xl border-2 border-b-0 border-[#5a4646] bg-gradient-to-r from-[#3a1517] via-[#2a1414] to-[#2b1415] px-1 pt-2 shadow-[0_0_60px_rgba(0,0,0,0.3)]">
      {apps.map((a) => <DockItem key={a.name} app={a} />)}
      <Separator />
      {tools.map((a) => <DockItem key={a.name} app={a} />)}
      <Separator />
      <DockItem app={{ name: "Trash", icon: <TrashIcon /> }} />
    </div>
  </footer>
);

export default function App() {
  return (
    <div className="relative flex min-h-screen flex-col overflow-hidden bg-black font-['Inter','Liberation_Sans',sans-serif]">
      <Wallpaper />
      <MenuBar />
      <div className="relative mt-0.5 flex flex-1 flex-col">
        <div className="overflow-hidden rounded-t-xl border-t-2 border-[#6b6c6e] bg-[#38393d]">
          <TabStrip />
          <Toolbar />
          <BookmarksBar />
        </div>
        <Page />
      </div>
      <Dock />
    </div>
  );
}
